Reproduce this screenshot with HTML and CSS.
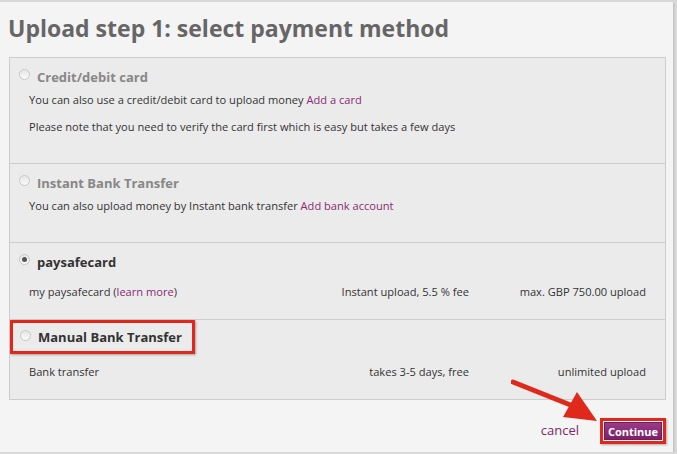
FILE: index.html
```html
<!DOCTYPE html>
<html lang="en">
<head>
    <meta charset="UTF-8">
    <meta name="viewport" content="width=device-width, initial-scale=1.0">
    <title>Upload step 1</title>
    <link rel="stylesheet" href="styles.css">
</head>
<body>
    <div class="page">
        <h1>Upload step 1: select payment method</h1>

        <div class="methods">
            <!-- Credit/debit card -->
            <div class="method method-card disabled">
                <label class="method-label"><span class="radio"></span>Credit/debit card</label>
                <p>You can also use a credit/debit card to upload money <a href="#">Add a card</a></p>
                <p>Please note that you need to verify the card first which is easy but takes a few days</p>
            </div>

            <!-- Instant bank transfer -->
            <div class="method method-instant disabled">
                <label class="method-label"><span class="radio"></span>Instant Bank Transfer</label>
                <p>You can also upload money by Instant bank transfer <a href="#">Add bank account</a></p>
            </div>

            <!-- paysafecard -->
            <div class="method method-psc">
                <label class="method-label"><span class="radio checked"></span>paysafecard</label>
                <div class="details">
                    <span>my paysafecard (<a href="#">learn more</a>)</span>
                    <span class="col">Instant upload, 5.5 % fee</span>
                    <span class="col">max. GBP 750.00 upload</span>
                </div>
            </div>

            <!-- Manual bank transfer -->
            <div class="method method-manual">
                <label class="method-label highlight"><span class="radio"></span>Manual Bank Transfer</label>
                <div class="details">
                    <span>Bank transfer</span>
                    <span class="col">takes 3-5 days, free</span>
                    <span class="col">unlimited upload</span>
                </div>
            </div>
        </div>

        <div class="actions">
            <a href="#" class="cancel">cancel</a>
            <span class="highlight-btn"><button>Continue</button></span>
        </div>

        <!-- annotation arrow -->
        <svg class="arrow" width="100" height="60" viewBox="0 0 100 60">
            <line x1="2" y1="7" x2="62" y2="31" stroke="#e0291d" stroke-width="5" stroke-linecap="round"/>
            <polygon points="52,42 66,17 86,46" fill="#e0291d"/>
        </svg>
    </div>
</body>
</html>
```

FILE: styles.css
```css
body {
    margin: 0;
    padding: 0;
    background-color: #d9d9d9;
    font-family: "Open Sans", Arial, sans-serif;
    color: #333;
}

.page {
    position: relative;
    width: 673px;
    height: 450px;
    margin-top: 2px;
    background-color: #f4f4f4;
    box-shadow: 1px 1px 2px rgba(0, 0, 0, 0.15);
}

h1 {
    margin: 0;
    padding: 10px 0 0 8px;
    height: 45px;
    font-size: 23px;
    font-weight: 700;
    color: #666;
}

.methods {
    margin: 0 7px 0 9px;
    border: 1px solid #cdcdcd;
    background-color: #ebebeb;
}

.method {
    border-bottom: 1px solid #cdcdcd;
    padding: 9px 19px 0 9px;
    box-sizing: border-box;
}

.method:last-child {
    border-bottom: none;
}

.method-card { height: 106px; }
.method-instant { height: 79px; }
.method-psc { height: 77px; }
.method-manual { height: 79px; padding: 0 19px 0 0; }

.method p {
    margin: 0 0 8px 10px;
    font-size: 11.1px;
    line-height: 19px;
}

a {
    color: #8a2a72;
    text-decoration: none;
}

.method-label {
    display: flex;
    align-items: center;
    margin-bottom: 3px;
    font-size: 13px;
    font-weight: 700;
    height: 20px;
    color: #333;
}

.disabled .method-label {
    color: #878787;
}

.radio {
    width: 9px;
    height: 9px;
    margin-right: 7px;
    margin-top: -6px;
    border: 1px solid #c8c8c8;
    border-radius: 50%;
    background: linear-gradient(#e6e6e6, #fafafa);
    box-sizing: content-box;
    position: relative;
}

.radio.checked::after {
    content: "";
    position: absolute;
    left: 2px;
    top: 2px;
    width: 5px;
    height: 5px;
    border-radius: 50%;
    background-color: #555;
}

.highlight {
    display: inline-flex;
    margin: 0;
    padding: 0 10px 0 7px;
    height: 28px;
    border: 3px solid #e2261b;
    box-shadow: 1px 1px 2px rgba(0, 0, 0, 0.3);
}

.highlight .radio {
    margin-top: -4px;
}

.details {
    display: grid;
    grid-template-columns: 1fr 180px 177px;
    margin-top: 10px;
    margin-left: 10px;
    font-size: 11.1px;
    line-height: 20px;
}

.method-manual .details {
    margin-left: 19px;
    margin-top: 8px;
}

.details .col {
    text-align: right;
}

.actions {
    display: flex;
    justify-content: flex-end;
    align-items: center;
    gap: 21px;
    margin: 18px 7px 0 0;
}

.cancel {
    margin-top: -3px;
    font-size: 13px;
    color: #7a2a66;
}

.highlight-btn {
    display: inline-block;
    border: 3px solid #e2261b;
    padding: 1px;
    background-color: #f4f4f4;
    box-shadow: 1px 1px 2px rgba(0, 0, 0, 0.3);
}

button {
    display: block;
    width: 58px;
    height: 18px;
    padding: 0;
    border: 1px solid #6d1c5c;
    background: linear-gradient(#9a3a88, #7b2168);
    color: white;
    font-family: "Open Sans", Arial, sans-serif;
    font-size: 11px;
    font-weight: 700;
    cursor: pointer;
}

.arrow {
    position: absolute;
    left: 511px;
    top: 373px;
}
```
